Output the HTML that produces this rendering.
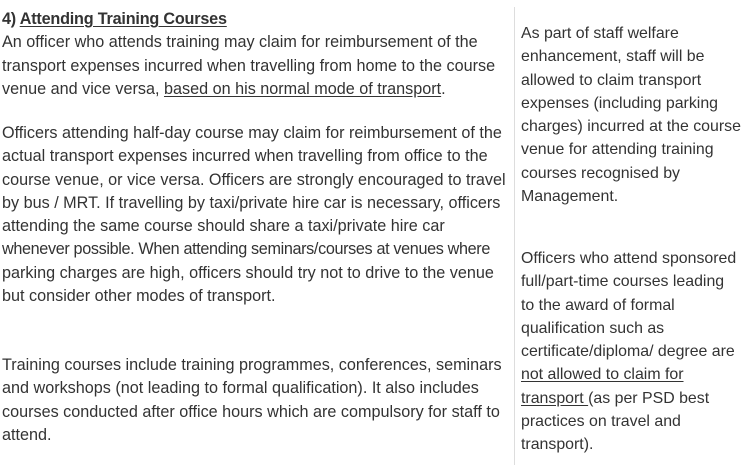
<!DOCTYPE html>
<html><head><meta charset="utf-8"><style>
html,body{margin:0;padding:0;background:#fff;width:755px;height:475px;overflow:hidden}
body{font-family:"Liberation Sans",sans-serif;font-size:16.2px;color:#333;position:relative}
.b{position:absolute;line-height:23.3px;white-space:nowrap}
.b div{height:23.3px}
u{text-decoration:underline;text-underline-offset:2px}
.div{position:absolute;left:514px;top:7px;width:1px;height:458px;background:#ddd}
</style></head><body>
<div class="b" style="left:2px;top:8px;width:505px">
<div><b style="letter-spacing:-0.2px">4) <u>Attending Training Courses</u></b></div>
<div>An officer who attends training may claim for reimbursement of the</div>
<div>transport expenses incurred when travelling from home to the course</div>
<div>venue and vice versa, <u>based on his normal mode of transport</u>.</div>
</div>
<div class="b" style="left:2px;top:122px;width:505px">
<div>Officers attending half-day course may claim for reimbursement of the</div>
<div>actual transport expenses incurred when travelling from office to the</div>
<div>course venue, or vice versa. Officers are strongly encouraged to travel</div>
<div>by bus / MRT. If travelling by taxi/private hire car is necessary, officers</div>
<div>attending the same course should share a taxi/private hire car</div>
<div style="letter-spacing:-0.35px">whenever possible. When attending seminars/courses at venues where</div>
<div>parking charges are high, officers should try not to drive to the venue</div>
<div>but consider other modes of transport.</div>
</div>
<div class="b" style="left:2px;top:354px;width:505px">
<div>Training courses include training programmes, conferences, seminars</div>
<div>and workshops (not leading to formal qualification). It also includes</div>
<div>courses conducted after office hours which are compulsory for staff to</div>
<div>attend.</div>
</div>
<div class="div"></div>
<div class="b" style="left:521px;top:22px;font-size:15.9px">
<div>As part of staff welfare</div>
<div>enhancement, staff will be</div>
<div>allowed to claim transport</div>
<div>expenses (including parking</div>
<div>charges) incurred at the course</div>
<div>venue for attending training</div>
<div>courses recognised by</div>
<div>Management.</div>
</div>
<div class="b" style="left:521px;top:247px;font-size:15.9px">
<div>Officers who attend sponsored</div>
<div>full/part-time courses leading</div>
<div>to the award of formal</div>
<div>qualification such as</div>
<div>certificate/diploma/ degree are</div>
<div><u>not allowed to claim for</u></div>
<div><u>transport </u>(as per PSD best</div>
<div>practices on travel and</div>
<div>transport).</div>
</div>
</body></html>
